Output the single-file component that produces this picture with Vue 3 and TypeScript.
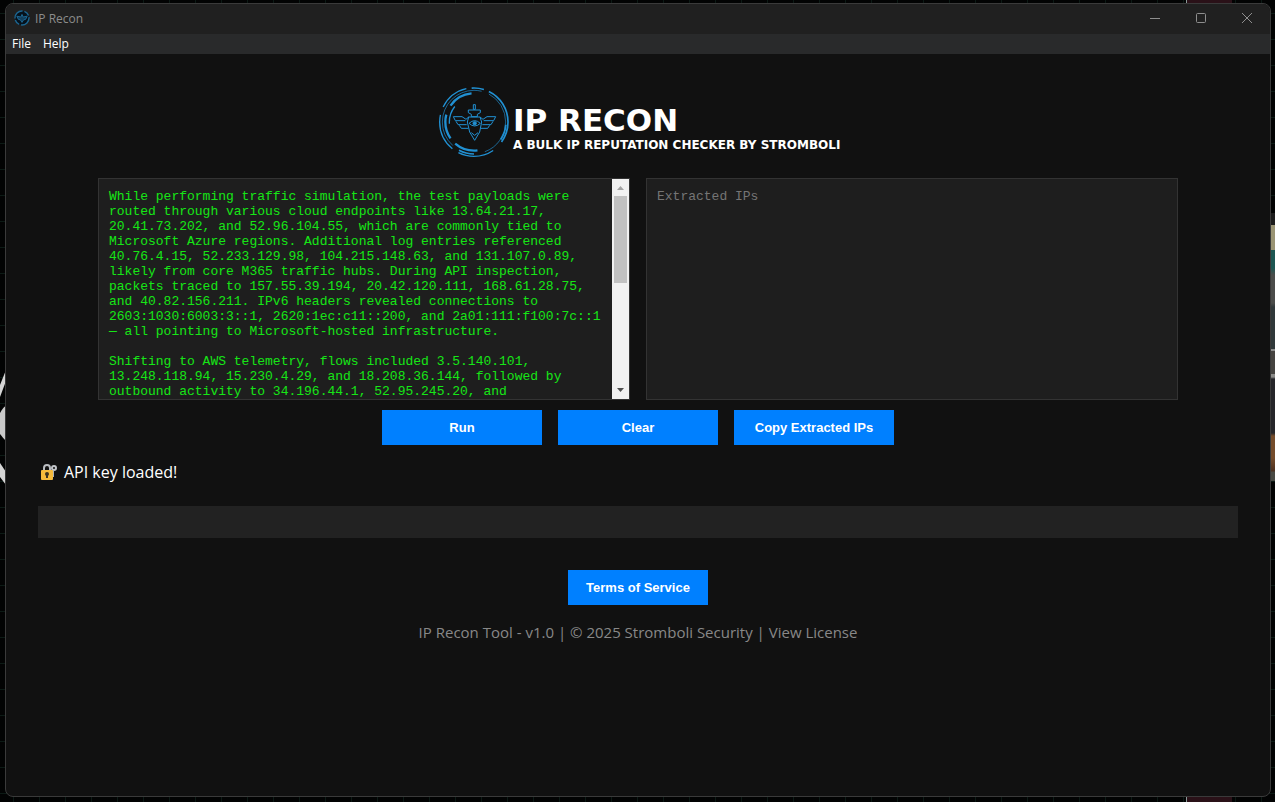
<script setup lang="ts">
import { ref } from 'vue'

interface Arc {
  r: number
  w: number
  start: number
  len: number
}

const source = ref(`While performing traffic simulation, the test payloads were routed through various cloud endpoints like 13.64.21.17, 20.41.73.202, and 52.96.104.55, which are commonly tied to Microsoft Azure regions. Additional log entries referenced 40.76.4.15, 52.233.129.98, 104.215.148.63, and 131.107.0.89, likely from core M365 traffic hubs. During API inspection, packets traced to 157.55.39.194, 20.42.120.111, 168.61.28.75, and 40.82.156.211. IPv6 headers revealed connections to 2603:1030:6003:3::1, 2620:1ec:c11::200, and 2a01:111:f100:7c::1 — all pointing to Microsoft-hosted infrastructure.

Shifting to AWS telemetry, flows included 3.5.140.101, 13.248.118.94, 15.230.4.29, and 18.208.36.144, followed by outbound activity to 34.196.44.1, 52.95.245.20, and 54.239.28.85.`)
const extracted = ref('')

// Ring segments of the emblem; angles run clockwise in degrees from the right.
const arcs: Arc[] = [
  { r: 103, w: 4, start: 206, len: 51 },
  { r: 102, w: 5, start: 266, len: 21 },
  { r: 102, w: 5, start: 296, len: 100 },
  { r: 103, w: 4, start: 56, len: 61 },
  { r: 103, w: 4, start: 129, len: 63 },
  { r: 95, w: 2, start: 298, len: 132 },
  { r: 95, w: 2, start: 132, len: 152 },
  { r: 96, w: 5, start: 5, len: 28 },
  { r: 96, w: 5, start: 90, len: 28 },
  { r: 86, w: 7, start: 215, len: 50 },
  { r: 86, w: 7, start: 145, len: 50 },
  { r: 86, w: 7, start: 83, len: 48 },
  { r: 74, w: 4, start: 175, len: 43 },
]

function clearAll(): void {
  source.value = ''
  extracted.value = ''
}

function run(): void {
  const found = source.value.match(/\b(?:\d{1,3}\.){3}\d{1,3}\b/g) ?? []
  extracted.value = [...new Set(found)].join('\n')
}

function copyExtracted(): void {
  void navigator.clipboard?.writeText(extracted.value)
}
</script>

<template>
  <div class="desktop">
    <svg class="wall-left" width="6" height="130" viewBox="0 0 6 130" aria-hidden="true">
      <path d="M0 25 6 10V21L0 37Z" fill="#d5d5d5" />
      <path d="M0 53Q4 46 6 46V81Q3 78 0 74Z" fill="#c9c9c9" />
      <path d="M0 103 6 112V125L0 117Z" fill="#d5d5d5" />
    </svg>
    <div class="wall-photo" aria-hidden="true"></div>
    <div class="wall-card" aria-hidden="true"></div>

    <div class="window">
      <header class="titlebar">
        <svg class="app-icon" width="16" height="16" viewBox="0 0 80 80" fill="none" stroke="#1b6591" aria-hidden="true">
          <circle cx="40" cy="40" r="35" fill="#06121c" stroke-width="7" stroke-dasharray="60 9 30 8" />
          <path d="M14 31 34 35 40 22 46 35 66 31 58 47 48 49 40 62 32 49 22 47Z" fill="#123f5c" stroke-width="5" />
        </svg>
        <span class="title">IP Recon</span>
        <div class="controls">
          <button type="button" aria-label="Minimize">
            <svg width="12" height="12" viewBox="0 0 12 12"><path d="M1 6.500H11" /></svg>
          </button>
          <button type="button" aria-label="Maximize">
            <svg width="12" height="12" viewBox="0 0 12 12"><rect x="1.500" y="1.500" width="9" height="9" rx="1" /></svg>
          </button>
          <button type="button" aria-label="Close">
            <svg width="12" height="12" viewBox="0 0 12 12"><path d="M1 1 11 11M11 1 1 11" /></svg>
          </button>
        </div>
      </header>
      <nav class="menubar">
        <button type="button">File</button>
        <button type="button">Help</button>
      </nav>

      <main>
        <div class="logo">
          <svg class="emblem" width="72" height="72" viewBox="12 10 216 216" fill="none" stroke="#2190d2" aria-hidden="true">
            <circle
              v-for="(arc, i) in arcs"
              :key="i"
              cx="120"
              cy="118"
              :r="arc.r"
              :stroke-width="arc.w"
              pathLength="360"
              :stroke-dasharray="`${arc.len} ${360 - arc.len}`"
              :stroke-dashoffset="-arc.start"
            />
            <g stroke-width="3" stroke-linejoin="round">
              <path d="M118 66H124V80H118Z" />
              <path d="M103 82H139V90L130 95V102H112V95L103 90Z" />
              <path d="M104 103H138L143 118 137 148 122 173 107 148 100 118Z" />
              <path d="M112 150 122 158 132 150" />
              <path d="M104 103 96 110 84 102H58L64 114H94M66 116 72 126H98M76 128 82 137H103" />
              <path d="M138 103 147 110 159 102H185L179 114H149M177 116 171 126H145M167 128 161 137H140" />
              <path d="M105 122Q122 106 139 122Q122 138 105 122Z" fill="#111" />
              <circle cx="122" cy="122" r="5" fill="#2190d2" />
            </g>
          </svg>
          <div class="wordmark">
            <h1>IP RECON</h1>
            <p>A BULK IP REPUTATION CHECKER BY STROMBOLI</p>
          </div>
        </div>

        <div class="panes">
          <div class="pane">
            <textarea v-model="source" aria-label="Source text" spellcheck="false"></textarea>
            <div class="scrollbar" aria-hidden="true">
              <svg width="17" height="17" viewBox="0 0 17 17"><path d="M5 11 8.500 7 12 11Z" fill="#a3a3a3" /></svg>
              <div class="track"><div class="thumb"></div></div>
              <svg width="17" height="17" viewBox="0 0 17 17"><path d="M5 6 8.500 10 12 6Z" fill="#505050" /></svg>
            </div>
          </div>
          <div class="pane">
            <textarea v-model="extracted" aria-label="Extracted IPs" placeholder="Extracted IPs" readonly></textarea>
          </div>
        </div>

        <div class="actions">
          <button type="button" class="primary" @click="run">Run</button>
          <button type="button" class="primary" @click="clearAll">Clear</button>
          <button type="button" class="primary" @click="copyExtracted">Copy Extracted IPs</button>
        </div>

        <p class="status" role="status">
          <svg width="17" height="18" viewBox="0 0 17 18" fill="none" aria-hidden="true">
            <path d="M3 8V5Q3 2 6 2T9 5V8" stroke="#b9bcc0" stroke-width="2" />
            <circle cx="13" cy="5" r="2" stroke="#c3c6ca" stroke-width="2" />
            <path d="M12 7V14" stroke="#aeb2b7" stroke-width="2" />
            <rect x="0" y="7" width="12" height="10" rx="1" fill="#f7bb3c" />
            <circle cx="6" cy="11" r="2" fill="#3d3322" />
            <path d="M6 11V15" stroke="#3d3322" stroke-width="2" />
          </svg>
          API key loaded!
        </p>
        <div class="results"></div>

        <button type="button" class="primary terms">Terms of Service</button>
        <footer>IP Recon Tool - v1.0 | © 2025 Stromboli Security | <a href="#license">View License</a></footer>
      </main>
    </div>
  </div>
</template>

<style>
body {
  margin: 0;
  background: #000;
}
</style>

<style scoped>
* {
  box-sizing: border-box;
}

.desktop {
  position: relative;
  display: flex;
  min-height: 100vh;
  padding: 3px 4px 5px 5px;
  background:
    repeating-linear-gradient(transparent 0 13px, #0c1a15 13px 14px, transparent 14px 26px),
    repeating-linear-gradient(90deg, #020303 0 13px, #0c1a15 13px 14px, #020303 14px 26px);
  font-family: 'Segoe UI', 'Open Sans', sans-serif;
}

.wall-left {
  position: absolute;
  left: 0;
  top: 360px;
}

.wall-photo {
  position: absolute;
  right: 0;
  top: 213px;
  width: 5px;
  height: 268px;
  background: linear-gradient(
    #1c1c1c 0 12px,
    #9a9474 12px 37px,
    #1d5652 37px 55px,
    #4b4c4a 62px 90px,
    #30383a 94px 136px,
    #8d8d8d 136px 138px,
    #454340 138px 161px,
    #8a8a88 161px 164px,
    #26262a 166px 220px,
    #744c2b 223px 245px,
    #4b3020 258px,
    #484943 259px 268px
  );
}

.wall-card {
  position: absolute;
  top: 0;
  bottom: 0;
  right: 43px;
  width: 46px;
  border-left: 1px solid #8a9a98;
  background: #2a1118;
}

.window {
  position: relative;
  flex: 1;
  border: 1px solid #3a3a3a;
  border-radius: 8px;
  background: #111;
  overflow: hidden;
}

.titlebar {
  display: flex;
  align-items: center;
  height: 30px;
  padding: 0 0 2px 8px;
  background: #202020;
  color: #8c8c8c;
  font-size: 12px;
}

.title {
  margin-left: 5px;
}

.controls {
  display: flex;
  margin-left: auto;
}

.controls button {
  display: grid;
  place-items: center;
  width: 46px;
  height: 28px;
  padding: 0;
  border: 0;
  background: none;
}

.controls svg {
  fill: none;
  stroke: #8e8e8e;
}

.menubar {
  display: flex;
  height: 20px;
  background: #292a2b;
}

.menubar button {
  padding: 0 6px;
  border: 0;
  background: none;
  color: #fff;
  font: 12px/20px 'Segoe UI', 'Open Sans', sans-serif;
}

main {
  display: flex;
  flex-direction: column;
  align-items: center;
  padding: 32px;
}

.logo {
  display: flex;
  gap: 3px;
  width: 400px;
  height: 72px;
  color: #fff;
}

.emblem {
  flex: none;
}

.wordmark {
  padding-top: 16px;
  font-family: 'DejaVu Sans', sans-serif;
  font-weight: 700;
  white-space: nowrap;
}

h1 {
  margin: 0;
  font-size: 31px;
  line-height: 36px;
}

.wordmark p {
  margin: 0;
  font-size: 12px;
  line-height: 14px;
}

.panes {
  display: flex;
  gap: 16px;
  width: 100%;
  max-width: 1080px;
  margin-top: 20px;
}

.pane {
  display: flex;
  flex: 1;
  min-width: 0;
  height: 222px;
  border: 1px solid #333;
  background: #1e1e1e;
}

textarea {
  flex: 1;
  min-width: 0;
  padding: 10px;
  border: 0;
  outline: 0;
  background: none;
  color: #16e616;
  font: 13px/15px 'Courier New', 'Liberation Mono', monospace;
  resize: none;
  scrollbar-width: none;
}

textarea::placeholder {
  color: #757575;
}

.scrollbar {
  display: flex;
  flex-direction: column;
  width: 17px;
  background: #f1f1f1;
}

.track {
  flex: 1;
  padding: 0 2px;
}

.thumb {
  height: 87px;
  background: #c1c1c1;
}

.actions {
  display: flex;
  gap: 16px;
  margin-top: 10px;
}

.primary {
  width: 160px;
  height: 35px;
  padding: 0;
  border: 0;
  background: #0080ff;
  color: #fff;
  font: 700 13px 'Liberation Sans', sans-serif;
}

.status {
  display: flex;
  align-items: center;
  gap: 6px;
  width: 100%;
  max-width: 1200px;
  margin: 15px 0 0;
  padding-left: 3px;
  color: #fff;
  font-size: 16px;
  line-height: 24px;
}

.results {
  width: 100%;
  max-width: 1200px;
  height: 32px;
  margin-top: 22px;
  background: #222;
}

.terms {
  width: 140px;
  margin-top: 32px;
}

footer {
  margin-top: 15px;
  color: #888;
  font-size: 15px;
  line-height: 24px;
}

footer a {
  color: inherit;
  text-decoration: none;
}
</style>
